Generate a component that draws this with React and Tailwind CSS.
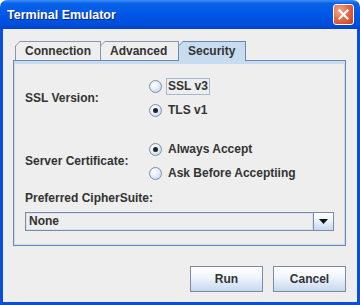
import React from 'react';

const font = "font-['Liberation_Sans',Arial,sans-serif] font-bold text-[12px] text-[#333333]";

function Tab({ label, width, selected }) {
    const edge = selected ? 'bg-[#6f86b5]' : 'bg-[#8795ad]';
    const fill = selected ? 'bg-[#c8dcf0]' : 'bg-[#eeeeee]';
    return (
        <div
            className={`${edge} ${selected ? 'h-[20px] -mb-px relative z-10' : 'h-[19px]'} -mr-px [clip-path:polygon(5px_0,100%_0,100%_100%,0_100%,0_5px)] pt-px px-px`}
            style={{ width }}
        >
            <div className={`${fill} h-full pl-[9px] leading-[18px] [clip-path:polygon(4px_0,100%_0,100%_100%,0_100%,0_4px)]`}>
                {label}
            </div>
        </div>
    );
}

function Radio({ checked }) {
    return (
        <span className="w-[13px] h-[13px] rounded-full border border-[#7d8fae] bg-[radial-gradient(circle_at_35%_35%,#ffffff_0%,#e6eef8_45%,#b9cde6_100%)] flex items-center justify-center shrink-0">
            {checked && <span className="w-[5px] h-[5px] rounded-full bg-[#222]" />}
        </span>
    );
}

function RadioRow({ label, checked, focused }) {
    return (
        <div className="h-[24px] flex items-center gap-[4px]">
            <Radio checked={checked} />
            <span className={focused ? 'border border-[#a3b8cc] px-px leading-[15px]' : 'px-[2px] leading-[15px]'}>{label}</span>
        </div>
    );
}

function Button({ children }) {
    return (
        <button className="w-[73px] h-[26px] border border-[#7a8aa8] bg-[linear-gradient(#ffffff,#f1f6fc_40%,#c6d8ee)] text-[#333]">
            {children}
        </button>
    );
}

export default function App() {
    return (
        <div className={`w-[360px] h-[305px] bg-white flex flex-col ${font}`}>
            {/* title bar */}
            <div className="h-[29px] shrink-0 rounded-t-[7px] bg-[linear-gradient(#3b8ff6_0%,#0a62e8_12%,#0057e6_50%,#004ddb_85%,#0042c7_100%)] flex items-center justify-between pl-[7px] pr-[6px]">
                <span className="text-white text-[12.5px] pt-[2px] [text-shadow:1px_1px_#0b2a8a]">Terminal Emulator</span>
                <span className="w-[21px] h-[21px] rounded-[3px] border border-white bg-[radial-gradient(circle_at_30%_30%,#f2a88c,#e2603b_55%,#c2401e)] flex items-center justify-center">
                    <svg width="11" height="11" viewBox="0 0 11 11">
                        <path d="M1.5 1.5 L9.5 9.5 M9.5 1.5 L1.5 9.5" stroke="white" strokeWidth="2.2" strokeLinecap="square" />
                    </svg>
                </span>
            </div>

            {/* client */}
            <div className="flex-1 border-x-[3px] border-b-[3px] border-[#0a4fdc] bg-[#eeeeee] flex flex-col pt-[12px] pl-[10px] pr-[11px] pb-[10px]">
                <div className="flex items-end ml-[2px]">
                    <Tab label="Connection" width={86} />
                    <Tab label="Advanced" width={79} />
                    <Tab label="Security" width={68} selected />
                </div>

                <div className="h-[186px] border border-[#6f86b5] bg-[#c8dcf0] pt-[3px] px-px pb-px">
                    <div className="h-full bg-[#eeeeee] pl-[10px] pr-[10px] pt-[10px] flex flex-col">
                        <div className="flex">
                            <div className="w-[124px] flex items-center leading-[15px]">SSL Version:</div>
                            <div>
                                <RadioRow label="SSL v3" focused />
                                <RadioRow label="TLS v1" checked />
                            </div>
                        </div>
                        <div className="flex mt-[15px]">
                            <div className="w-[124px] flex items-center leading-[15px]">Server Certificate:</div>
                            <div>
                                <RadioRow label="Always Accept" checked />
                                <RadioRow label="Ask Before Acceptiing" />
                            </div>
                        </div>
                        <div className="mt-[6px] leading-[15px]">Preferred CipherSuite:</div>
                        <div className="mt-[6px] h-[19px] border border-[#7a8aa8] flex">
                            <div className="flex-1 bg-[#eeeeee] border border-[#d6e2f0] pl-[2px] leading-[15px]">None</div>
                            <div className="w-[20px] border-l border-[#7a8aa8] bg-[linear-gradient(#ffffff,#eef4fb_40%,#c6d8ee)] flex items-center justify-center">
                                <svg width="9" height="5" viewBox="0 0 9 5">
                                    <path d="M0 0 H9 L4.5 5 Z" fill="#111" />
                                </svg>
                            </div>
                        </div>
                    </div>
                </div>

                <div className="mt-auto flex justify-end gap-[10px]">
                    <Button>Run</Button>
                    <Button>Cancel</Button>
                </div>
            </div>
        </div>
    );
}
